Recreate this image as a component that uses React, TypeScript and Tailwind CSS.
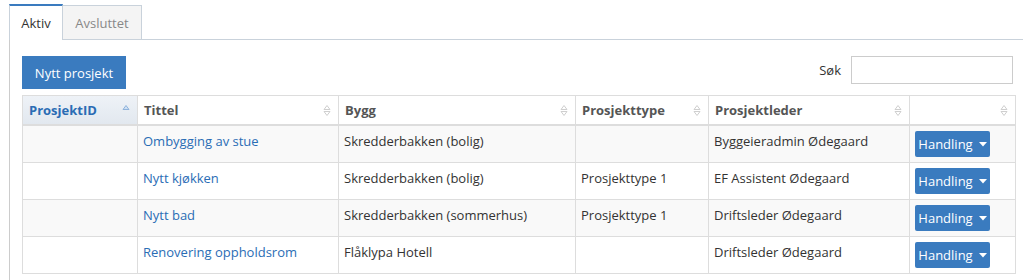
import React from "react";

function SortBoth() {
  return (
    <svg width="8" height="13" viewBox="0 0 8 13" className="shrink-0">
      <path d="M1 5.5 L4 1.5 L7 5.5 Z" fill="none" stroke="#cfcfcf" strokeWidth="1" strokeLinejoin="round" />
      <path d="M1 7.5 L4 11.5 L7 7.5 Z" fill="none" stroke="#cfcfcf" strokeWidth="1" strokeLinejoin="round" />
    </svg>
  );
}

function SortUp() {
  return (
    <svg width="8" height="13" viewBox="0 0 8 13" className="shrink-0">
      <path d="M1 5.5 L4 1.5 L7 5.5 Z" fill="#cfe0f3" stroke="#8fb3dc" strokeWidth="1" strokeLinejoin="round" />
    </svg>
  );
}

function Caret() {
  return (
    <svg width="8" height="5" viewBox="0 0 8 5" className="ml-[6px]">
      <path d="M0 0 L8 0 L4 4.5 Z" fill="#ffffff" />
    </svg>
  );
}

const rows = [
  { t: "Ombygging av stue", b: "Skredderbakken (bolig)", p: "", l: "Byggeieradmin Ødegaard" },
  { t: "Nytt kjøkken", b: "Skredderbakken (bolig)", p: "Prosjekttype 1", l: "EF Assistent Ødegaard" },
  { t: "Nytt bad", b: "Skredderbakken (sommerhus)", p: "Prosjekttype 1", l: "Driftsleder Ødegaard" },
  { t: "Renovering oppholdsrom", b: "Flåklypa Hotell", p: "", l: "Driftsleder Ødegaard" },
];

const cols = [
  { w: "w-[114px]", label: "ProsjektID" },
  { w: "w-[201px]", label: "Tittel" },
  { w: "w-[237px]", label: "Bygg" },
  { w: "w-[133px]", label: "Prosjekttype" },
  { w: "w-[201px]", label: "Prosjektleder" },
  { w: "w-[106px]", label: "" },
];

export default function App() {
  return (
    <div
      className="w-[1023px] h-[280px] overflow-hidden bg-white text-[13px] leading-[20px] text-[#333]"
      style={{ fontFamily: '"Open Sans", "Noto Sans", sans-serif' }}
    >
      <div className="pl-[9px] pt-[4px]">
        <div className="flex items-end border-b border-[#c9d2db] h-[36px]">
          <div className="relative -mb-px h-[36px] w-[54px] border-l border-r border-[#c9d2db] border-t-2 border-t-[#3a7bbf] bg-white flex items-center justify-center text-[#333]">
            Aktiv
          </div>
          <div className="h-[34px] w-[79px] border-t border-r border-[#c9d2db] bg-[#f4f4f4] flex items-center justify-center text-[#888]">
            Avsluttet
          </div>
        </div>
        <div className="border-l border-[#cccccc] pl-[12px] pr-[8px] pt-[16px] h-[260px]">
          <div className="flex items-start justify-between w-[994px]">
            <button className="h-[33px] w-[104px] bg-[#3a7bbf] text-white text-[13px] flex items-center justify-center">
              Nytt prosjekt
            </button>
            <div className="flex items-center mr-[3px]">
              <span className="mr-[10px] text-[#333]">Søk</span>
              <div className="w-[162px] h-[28px] border border-[#cccccc] bg-white" />
            </div>
          </div>
          <div className="mt-[6px] w-[994px] border border-[#dddddd]">
            <div className="flex border-b-2 border-[#dddddd]">
              {cols.map((c, i) => (
                <div
                  key={i}
                  className={`${c.w} shrink-0 flex items-center justify-between px-[6px] py-[4px] font-bold ${
                    i > 0 ? "border-l border-[#dddddd]" : ""
                  } ${
                    i === 0
                      ? "bg-gradient-to-b from-[#eef2f7] to-[#e2e8ef] text-[#2b6cb4]"
                      : "text-[#555]"
                  }`}
                >
                  <span className="h-[20px]">{c.label}</span>
                  <span className="mr-[1px]">{i === 0 ? <SortUp /> : <SortBoth />}</span>
                </div>
              ))}
            </div>
            {rows.map((r, ri) => (
              <div
                key={ri}
                className={`flex ${ri > 0 ? "border-t border-[#dddddd]" : ""} ${
                  ri % 2 === 0 ? "bg-[#f9f9f9]" : "bg-white"
                }`}
              >
                <div className="w-[114px] shrink-0 px-[6px] py-[5px]" />
                <div className="w-[201px] shrink-0 border-l border-[#dddddd] px-[5px] py-[5px] text-[#2a6db5]">
                  {r.t}
                </div>
                <div className="w-[237px] shrink-0 border-l border-[#dddddd] px-[5px] py-[5px]">{r.b}</div>
                <div className="w-[133px] shrink-0 border-l border-[#dddddd] px-[5px] py-[5px]">{r.p}</div>
                <div className="w-[201px] shrink-0 border-l border-[#dddddd] px-[5px] py-[5px]">{r.l}</div>
                <div className="w-[106px] shrink-0 border-l border-[#dddddd] px-[5px] py-[5px]">
                  <button className="h-[26px] w-[75px] bg-[#3a7bbf] text-white rounded-[2px] flex items-center justify-center text-[13px]">
                    Handling
                    <Caret />
                  </button>
                </div>
              </div>
            ))}
          </div>
        </div>
      </div>
    </div>
  );
}
